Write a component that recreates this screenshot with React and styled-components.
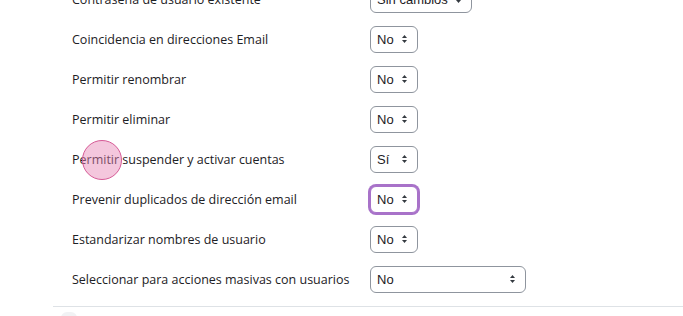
import React from "react";
import styled, { createGlobalStyle } from "styled-components";

const Global = createGlobalStyle`
  html, body { margin: 0; padding: 0; background: #fff; overflow: hidden; }
  body { width: 683px; height: 316px; }
`;

const Page = styled.div`
  position: relative;
  width: 683px;
  height: 316px;
  overflow: hidden;
`;

const Section = styled.div`
  margin-top: -21px;
  margin-left: 53px;
`;

const Row = styled.div`
  display: flex;
  align-items: center;
  height: 40px;
  padding-left: 19px;
`;

const Label = styled.div`
  width: 298px;
  flex: none;
  font-family: "Open Sans", "DejaVu Sans", sans-serif;
  font-size: 12.5px;
  color: #1d2125;
  white-space: nowrap;
`;

const SelectBox = styled.div`
  box-sizing: border-box;
  display: flex;
  align-items: center;
  justify-content: space-between;
  width: ${(p) => p.$w}px;
  height: 27px;
  padding: 0 10px 0 6px;
  border: 1px solid ${(p) => (p.$focus ? "#a872c9" : "#8f959e")};
  border-radius: 6px;
  background: #fff;
  font-family: "Liberation Sans", Arial, sans-serif;
  font-size: 13px;
  color: #1d2125;
  box-shadow: ${(p) => (p.$focus ? "0 0 0 2px #a872c9" : "none")};
`;

const Divider = styled.div`
  margin-top: 7px;
  height: 1px;
  background: #dee2e6;
`;

const Faint = styled.div`
  margin: 5px 0 0 8px;
  width: 16px;
  height: 6px;
  border-radius: 8px 8px 0 0;
  background: #f1f2f4;
`;

const Tap = styled.div`
  position: absolute;
  left: 82px;
  top: 140px;
  width: 40px;
  height: 40px;
  box-sizing: border-box;
  border-radius: 50%;
  border: 1.5px solid #d65a96;
  background: rgba(230, 130, 180, 0.45);
  pointer-events: none;
`;

const Caret = () => (
  <svg width="5" height="8" viewBox="0 0 5 8">
    <path d="M2.5 0 L5 3 H0 Z" fill="#343a40" />
    <path d="M2.5 8 L5 5 H0 Z" fill="#343a40" />
  </svg>
);

const Select = ({ value, w = 48, focus }) => (
  <SelectBox $w={w} $focus={focus}>
    <span>{value}</span>
    <Caret />
  </SelectBox>
);

const rows = [
  ["Contraseña de usuario existente", "Sin cambios", 102],
  ["Coincidencia en direcciones Email", "No", 48],
  ["Permitir renombrar", "No", 48],
  ["Permitir eliminar", "No", 48],
  ["Permitir suspender y activar cuentas", "Sí", 48],
  ["Prevenir duplicados de dirección email", "No", 48, true],
  ["Estandarizar nombres de usuario", "No", 48],
  ["Seleccionar para acciones masivas con usuarios", "No", 156],
];

export default function App() {
  return (
    <Page>
      <Global />
      <Section>
        {rows.map(([label, value, w, focus]) => (
          <Row key={label}>
            <Label>{label}</Label>
            <Select value={value} w={w} focus={focus} />
          </Row>
        ))}
        <Divider />
        <Faint />
      </Section>
      <Tap />
    </Page>
  );
}
